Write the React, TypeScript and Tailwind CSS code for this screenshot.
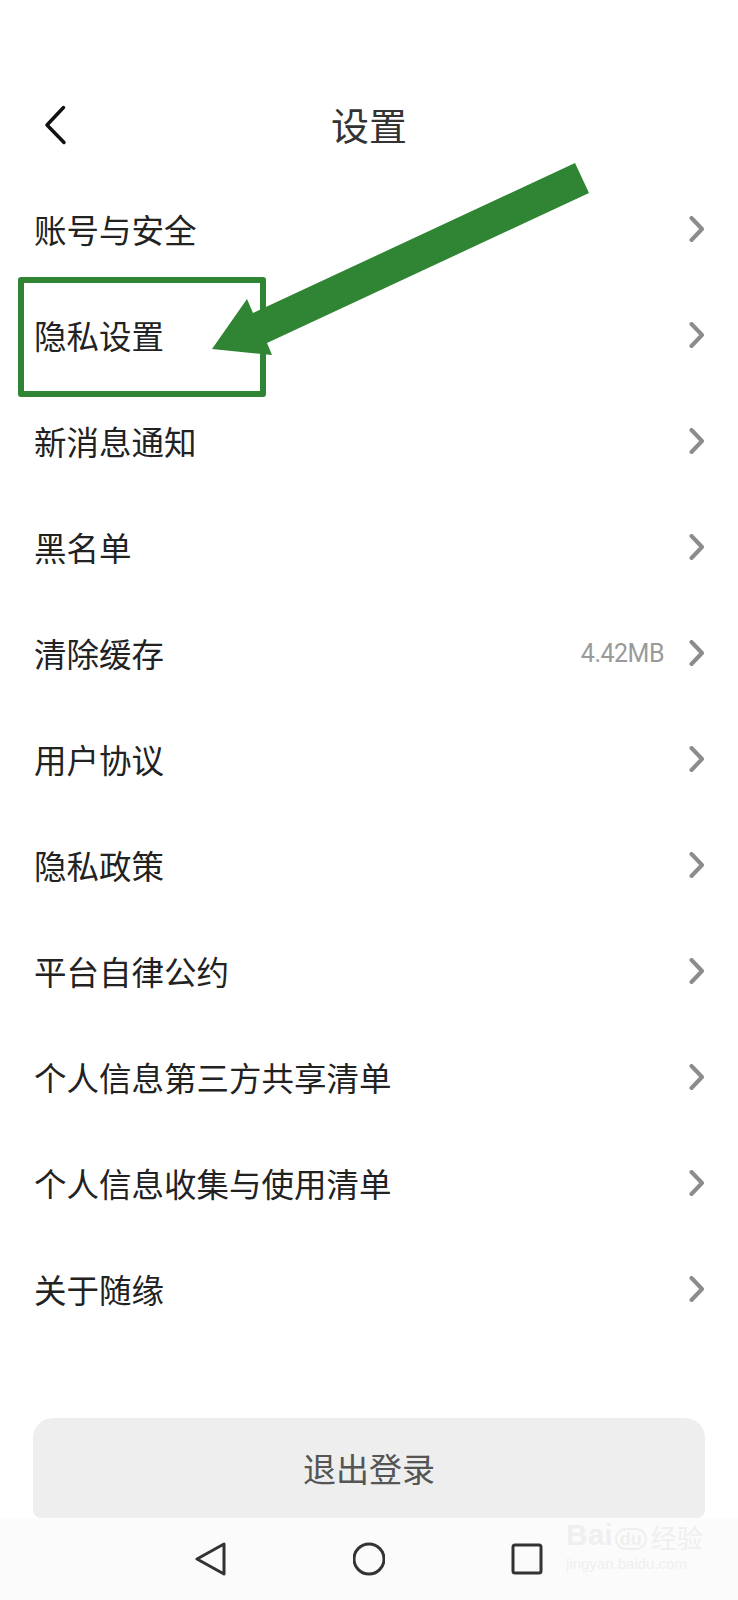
import React from "react";

type RowProps = {
  label: string;
  value?: string;
};

const rows: RowProps[] = [
  { label: "账号与安全" },
  { label: "隐私设置" },
  { label: "新消息通知" },
  { label: "黑名单" },
  { label: "清除缓存", value: "4.42MB" },
  { label: "用户协议" },
  { label: "隐私政策" },
  { label: "平台自律公约" },
  { label: "个人信息第三方共享清单" },
  { label: "个人信息收集与使用清单" },
  { label: "关于随缘" },
];

const Chevron = () => (
  <svg width="16" height="26" viewBox="0 0 16 26" fill="none">
    <polyline
      points="2.5,2 13,13 2.5,24"
      stroke="#8c8c8c"
      strokeWidth="4"
      strokeLinecap="round"
      strokeLinejoin="round"
    />
  </svg>
);

const Row = ({ label, value }: RowProps) => (
  <div className="flex h-[106px] items-center justify-between pl-[34px] pr-[33px]">
    <span className="text-[32.5px] leading-none text-[#222222]">{label}</span>
    <div className="flex items-center gap-[25px]">
      {value && (
        <span className="font-['Roboto',sans-serif] text-[25px] leading-none tracking-[-0.5px] text-[#9a9a9a]">
          {value}
        </span>
      )}
      <Chevron />
    </div>
  </div>
);

const App = () => {
  return (
    <div className="relative flex h-[1600px] w-[738px] flex-col overflow-hidden bg-white font-['Noto_Sans_CJK_SC','Noto_Sans',sans-serif]">
      <header className="mt-[90px] mb-[16px] grid h-[70px] grid-cols-[1fr_auto_1fr] items-center">
        <div className="pl-[44px]">
          <svg width="24" height="40" viewBox="0 0 24 40" fill="none">
            <polyline
              points="19.5,2.5 3,20 20,37.5"
              stroke="#111111"
              strokeWidth="3.5"
              strokeLinecap="round"
              strokeLinejoin="round"
            />
          </svg>
        </div>
        <h1 className="-mt-[3px] text-[38px] leading-none text-[#333333]">设置</h1>
        <div />
      </header>

      <div className="flex flex-col">
        {rows.map((row) => (
          <Row key={row.label} label={row.label} value={row.value} />
        ))}
      </div>

      <button className="mx-[33px] mt-[76px] flex h-[100px] items-center justify-center rounded-t-[20px] rounded-b-[8px] bg-[#eeeeee] text-[33px] leading-none text-[#555555]">
        退出登录
      </button>

      <nav className="flex h-[82px] items-center gap-[126px] bg-[#fbfbfb] pl-[195px]">
        <svg width="32" height="36" viewBox="0 0 32 36" fill="none">
          <polygon
            points="2,18 29,3 29,33"
            stroke="#333333"
            strokeWidth="3"
            strokeLinejoin="round"
          />
        </svg>
        <svg width="32" height="36" viewBox="0 0 32 36" fill="none">
          <circle cx="16" cy="18" r="15" stroke="#333333" strokeWidth="3" />
        </svg>
        <svg width="32" height="36" viewBox="0 0 32 36" fill="none">
          <rect x="2" y="4" width="28" height="28" rx="2" stroke="#333333" strokeWidth="3" />
        </svg>
      </nav>

      {/* annotation: box + arrow */}
      <div className="absolute left-[18px] top-[277px] h-[120px] w-[248px] rounded-[3px] border-[6px] border-[#2f8533]" />
      <svg className="absolute left-0 top-0" width="738" height="420" viewBox="0 0 738 420">
        <polygon
          points="575,163 589,193 267,343 272,355 212,349 247,299 253,313"
          fill="#2f8533"
        />
      </svg>

      {/* watermark */}
      <div className="absolute left-[566px] top-[1520px] flex flex-col items-start text-[#efefef]">
        <div className="flex items-end font-['Liberation_Sans',sans-serif] text-[30px] font-bold leading-none">
          <span>Bai</span>
          <span className="ml-[2px] rounded-full border-[2px] border-[#efefef] px-[3px] text-[18px]">du</span>
          <span className="ml-[4px] font-['Noto_Sans_CJK_SC',sans-serif] text-[26px] font-normal">经验</span>
        </div>
        <span className="mt-[6px] font-['Liberation_Sans',sans-serif] text-[15px] leading-none">jingyan.baidu.com</span>
      </div>
    </div>
  );
};

export default App;
